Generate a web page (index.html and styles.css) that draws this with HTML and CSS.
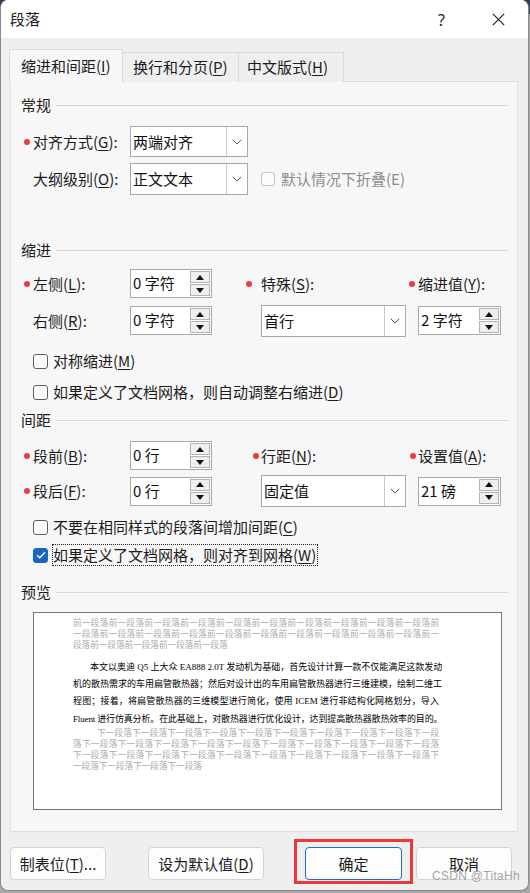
FILE: index.html
```html
<!DOCTYPE html>
<html lang="zh-CN">
<head>
<meta charset="utf-8">
<title>段落</title>
<link rel="stylesheet" href="styles.css">
</head>
<body>
<div class="window">
  <div class="titlebar">
    <span class="title">段落</span>
    <span class="tb-btn help">?</span>
    <span class="tb-btn close"><svg width="13" height="13" viewBox="0 0 13 13"><path d="M0.8 0.8 L12.2 12.2 M12.2 0.8 L0.8 12.2" stroke="#1a1a1a" stroke-width="1.1" fill="none"/></svg></span>
  </div>

  <div class="tabs">
    <div class="tab active">缩进和间距(<u>I</u>)</div>
    <div class="tab t2">换行和分页(<u>P</u>)</div>
    <div class="tab t3">中文版式(<u>H</u>)</div>
  </div>

  <div class="panel">
    <div class="sec-head h-general"><span>常规</span><i class="rule"></i></div>

    <div class="row r-align">
      <span class="lbl req">对齐方式(<u>G</u>):</span>
      <div class="combo c-small h31"><span class="val">两端对齐</span><span class="drop"><svg width="10" height="6" viewBox="0 0 10 6"><path d="M0.7 0.7 L5 5 L9.3 0.7" stroke="#5a5a5a" stroke-width="1" fill="none"/></svg></span></div>
    </div>
    <div class="row r-outline">
      <span class="lbl">大纲级别(<u>O</u>):</span>
      <div class="combo c-small h32"><span class="val">正文文本</span><span class="drop"><svg width="10" height="6" viewBox="0 0 10 6"><path d="M0.7 0.7 L5 5 L9.3 0.7" stroke="#5a5a5a" stroke-width="1" fill="none"/></svg></span></div>
      <span class="check disabled"><i class="box"></i><span>默认情况下折叠(E)</span></span>
    </div>

    <div class="sec-head h-indent"><span>缩进</span><i class="rule"></i></div>
    <div class="grid g-indent">
      <span class="lbl req c1">左侧(<u>L</u>):</span>
      <div class="spin c2"><span class="val">0 字符</span><span class="arrows"><i class="up"></i><i class="down"></i></span></div>
      <span class="lbl req wide c4">特殊(<u>S</u>):</span>
      <span class="lbl req tight c6">缩进值(<u>Y</u>):</span>

      <span class="lbl c1">右侧(<u>R</u>):</span>
      <div class="spin c2"><span class="val">0 字符</span><span class="arrows"><i class="up"></i><i class="down"></i></span></div>
      <div class="combo c4 h32"><span class="val">首行</span><span class="drop"><svg width="10" height="6" viewBox="0 0 10 6"><path d="M0.7 0.7 L5 5 L9.3 0.7" stroke="#5a5a5a" stroke-width="1" fill="none"/></svg></span></div>
      <div class="spin c6"><span class="val">2 字符</span><span class="arrows"><i class="up"></i><i class="down"></i></span></div>
    </div>
    <div class="check row-cb cb-a"><i class="box"></i><span>对称缩进(<u>M</u>)</span></div>
    <div class="check row-cb cb-b"><i class="box"></i><span>如果定义了文档网格，则自动调整右缩进(<u>D</u>)</span></div>

    <div class="sec-head h-spacing"><span>间距</span><i class="rule"></i></div>
    <div class="grid g-spacing">
      <span class="lbl req c1">段前(<u>B</u>):</span>
      <div class="spin c2"><span class="val">0 行</span><span class="arrows"><i class="up"></i><i class="down"></i></span></div>
      <span class="lbl req tight2 c4">行距(<u>N</u>):</span>
      <span class="lbl req tight2 c6">设置值(<u>A</u>):</span>

      <span class="lbl req c1">段后(<u>F</u>):</span>
      <div class="spin c2"><span class="val">0 行</span><span class="arrows"><i class="up"></i><i class="down"></i></span></div>
      <div class="combo c4 h32"><span class="val">固定值</span><span class="drop"><svg width="10" height="6" viewBox="0 0 10 6"><path d="M0.7 0.7 L5 5 L9.3 0.7" stroke="#5a5a5a" stroke-width="1" fill="none"/></svg></span></div>
      <div class="spin c6"><span class="val">21 磅</span><span class="arrows"><i class="up"></i><i class="down"></i></span></div>
    </div>
    <div class="check row-cb cb-c"><i class="box"></i><span>不要在相同样式的段落间增加间距(<u>C</u>)</span></div>
    <div class="check row-cb cb-d checked"><i class="box"><svg width="10" height="8" viewBox="0 0 10 8"><path d="M1 4.2 L3.7 6.8 L9 1.2" stroke="#fff" stroke-width="1.3" fill="none"/></svg></i><span class="focus">如果定义了文档网格，则对齐到网格(<u>W</u>)</span></div>

    <div class="sec-head h-preview"><span>预览</span><i class="rule"></i></div>
    <div class="preview">
      <div class="pv-gray">
        <div class="pv-line full">前一段落前一段落前一段落前一段落前一段落前一段落前一段落前一段落前一段落前一段落前</div>
        <div class="pv-line full">一段落前一段落前一段落前一段落前一段落前一段落前一段落前一段落前一段落前一段落前一</div>
        <div class="pv-line">段落前一段落前一段落前一段落前一段落</div>
      </div>
      <div class="pv-body">
        <div class="pv-bline full first">本文以奥迪 Q5 上大众 EA888 2.0T 发动机为基础，首先设计计算一款不仅能满足这款发动</div>
        <div class="pv-bline full">机的散热需求的车用扁管散热器；然后对设计出的车用扁管散热器进行三维建模，绘制二维工</div>
        <div class="pv-bline full">程图；接着，将扁管散热器的三维模型进行简化，使用 ICEM 进行非结构化网格划分，导入</div>
        <div class="pv-bline full last">Fluent 进行仿真分析。在此基础上，对散热器进行优化设计，达到提高散热器散热效率的目的。</div>
      </div>
      <div class="pv-gray">
        <div class="pv-line full first">下一段落下一段落下一段落下一段落下一段落下一段落下一段落下一段落下一段落下一段</div>
        <div class="pv-line full">落下一段落下一段落下一段落下一段落下一段落下一段落下一段落下一段落下一段落下一段落</div>
        <div class="pv-line full">下一段落下一段落下一段落下一段落下一段落下一段落下一段落下一段落下一段落下一段落下</div>
        <div class="pv-line">一段落下一段落下一段落下一段落</div>
      </div>
    </div>
  </div>

  <div class="buttons">
    <div class="btn b-tabs">制表位(<u>T</u>)...</div>
    <div class="btn b-default">设为默认值(<u>D</u>)</div>
    <div class="btn b-ok">确定</div>
    <div class="btn b-cancel">取消</div>
  </div>

  <div class="highlight"></div>
  <div class="watermark">CSDN @TitaHh</div>
</div>
</body>
</html>
```

FILE: styles.css
```css
* { box-sizing: border-box; margin: 0; padding: 0; }
html, body { width: 530px; height: 893px; overflow: hidden; }
body {
  background: linear-gradient(#2f3d5c 0 14px, #a8a8a8 14px);
  font-family: "Noto Sans CJK SC", "Noto Sans", sans-serif;
  font-size: 15px;
  color: #1b1b1b;
}
u { text-decoration: underline; text-underline-offset: 2px; text-decoration-thickness: 1px; }

.window {
  position: relative;
  width: 529px;
  height: 891px;
  background: #efefef;
  border: 1px solid #8a8a8a;
  border-top: none;
  border-radius: 8px;
  overflow: hidden;
  display: flex;
  flex-direction: column;
}

/* title bar */
.titlebar {
  height: 38px;
  flex: none;
  background: #ffffff;
  display: flex;
  align-items: center;
  padding-left: 9px;
}
.title { font-size: 15px; line-height: 20px; color: #1a1a1a; }
.tb-btn {
  width: 57px;
  height: 38px;
  display: flex;
  align-items: center;
  justify-content: center;
}
.help { margin-left: auto; font-family: "Noto Sans", sans-serif; font-size: 16px; color: #222; padding-top: 1px; }
.close { margin-right: 1px; }

/* tabs */
.tabs {
  flex: none;
  display: flex;
  align-items: flex-end;
  margin-top: 11px;
  padding-left: 8px;
  height: 33px;
  position: relative;
  z-index: 1;
  margin-bottom: -1px;
}
.tab {
  height: 30px;
  line-height: 28px;
  background: #efefef;
  border: 1px solid #dadada;
  border-bottom: none;
  font-size: 15px;
  color: #1b1b1b;
  white-space: nowrap;
}
.tab.active {
  height: 33px;
  line-height: 31px;
  width: 114px;
  padding-left: 11px;
  background: #f7f7f7;
  border-color: #dcdcdc;
}
.tab.t2 { width: 116px; padding-left: 10px; border-left: none; }
.tab.t3 { width: 105px; padding-left: 8px; border-left: none; }

/* panel */
.panel {
  flex: none;
  height: 751px;
  margin: 0 10px 0 9px;
  background: #f7f7f7;
  border: 1px solid #dfdfdf;
  padding: 0 9px 0 10px;
  display: flex;
  flex-direction: column;
}
.sec-head {
  display: flex;
  align-items: center;
  gap: 5px;
  height: 20px;
  line-height: 20px;
  font-size: 15px;
  color: #1b1b1b;
}
.sec-head .rule { flex: 1; height: 1px; background: #d9d9d9; }
.h-general { margin-top: 13px; }
.h-indent { margin-top: 45px; }
.h-spacing { margin-top: 6px; }
.h-preview { margin-top: 15px; }

.row { display: flex; align-items: center; }
.r-align { margin-top: 11px; height: 31px; }
.r-outline { margin-top: 6px; height: 32px; }

.lbl {
  font-size: 15px;
  line-height: 20px;
  white-space: nowrap;
  color: #1b1b1b;
}
.row .lbl, .grid .c1 { width: 109px; padding-left: 12px; }
.lbl.req::before {
  content: "";
  display: inline-block;
  width: 6px;
  height: 6px;
  border-radius: 50%;
  background: #f03a3a;
  margin-left: -9px;
  margin-right: 3px;
  vertical-align: 3px;
}
.lbl.wide::before { margin-left: -15px; margin-right: 9px; }
.lbl.tight::before { margin-left: -9px; margin-right: 3px; }
.lbl.tight2::before { margin-left: -8px; margin-right: 2px; }

/* combo box */
.combo {
  display: flex;
  background: #ffffff;
  border: 1px solid #a7a7a7;
}
.c-small { width: 118px; }
.h31 { height: 31px; }
.h32 { height: 32px; }
.combo .val {
  flex: 1;
  padding-left: 2px;
  font-size: 15px;
  line-height: 29px;
  color: #111;
  white-space: nowrap;
}
.combo .drop {
  width: 21px;
  border-left: 1px solid #c9c9c9;
  display: flex;
  align-items: center;
  justify-content: center;
}

/* spinner */
.spin {
  width: 82px;
  height: 29px;
  display: flex;
  background: #ffffff;
  border: 1px solid #a7a7a7;
}
.spin .val {
  flex: 1;
  padding-left: 2px;
  font-size: 15px;
  line-height: 26px;
  color: #111;
  white-space: nowrap;
}
.spin .arrows {
  width: 21px;
  padding: 1px 1px 1px 0;
  display: flex;
  flex-direction: column;
  gap: 1px;
}
.spin .arrows i {
  flex: 1;
  background: #efefef;
  border: 1px solid #b3b3b3;
  display: flex;
  align-items: center;
  justify-content: center;
}
.spin .arrows i::after {
  content: "";
  width: 0;
  height: 0;
  border-left: 4px solid transparent;
  border-right: 4px solid transparent;
}
.spin .arrows .up::after { border-bottom: 5px solid #111; }
.spin .arrows .down::after { border-top: 5px solid #111; }

/* grids */
.grid {
  display: grid;
  grid-template-columns: 109px 82px 49px 145px 12px 83px;
  align-items: center;
}
.g-indent { margin-top: 9px; grid-template-rows: 29px 33px; row-gap: 6px; }
.g-spacing { margin-top: 11px; grid-template-rows: 29px 32px; row-gap: 5px; }
.c1 { grid-column: 1; }
.c2 { grid-column: 2; }
.c4 { grid-column: 4; }
.c6 { grid-column: 6; }
.grid .combo.c4 { width: 145px; }
.grid .spin.c6 { width: 83px; }

/* checkboxes */
.check {
  display: flex;
  align-items: center;
  gap: 5px;
  font-size: 15px;
  line-height: 20px;
  white-space: nowrap;
  color: #1b1b1b;
}
.check .box {
  width: 15px;
  height: 15px;
  flex: none;
  border: 1px solid #5e5e5e;
  border-radius: 3px;
  background: #fbfbfb;
  display: flex;
  align-items: center;
  justify-content: center;
}
.check.disabled { margin-left: 13px; color: #8c8c8c; gap: 6px; }
.check.disabled .box { border-color: #c4c4c4; width: 14px; height: 14px; }
.row-cb { height: 24px; padding-left: 12px; }
.cb-a { margin-top: 12px; }
.cb-b { margin-top: 7px; }
.cb-c { margin-top: 8px; }
.cb-d { margin-top: 4px; gap: 4px; }
.check.checked .box { background: #1865c4; border-color: #1865c4; }
.focus { border: 1px dotted #222; padding: 0 1px 0 0; line-height: 20px; }

/* preview */
.preview {
  margin: 10px 0 0 12px;
  width: 469px;
  height: 198px;
  background: #ffffff;
  border: 1px solid #767676;
  padding: 5px 0 0 39px;
  font-family: "Liberation Serif", "Noto Sans CJK SC", serif;
}
.pv-gray { color: #aaaaaa; }
.pv-line {
  width: 366px;
  height: 11px;
  line-height: 11px;
  font-size: 8.6px;
  white-space: nowrap;
  text-align: left;
}
.pv-line.full { text-align: justify; text-align-last: justify; }
.pv-line.first { padding-left: 24px; }
.pv-body { margin-top: 8px; color: #000; }
.pv-bline {
  width: 366px;
  height: 17.2px;
  line-height: 17.2px;
  font-size: 9px;
  white-space: nowrap;
  text-align: justify;
  text-align-last: justify;
}
.pv-bline.first { padding-left: 17px; }
.pv-bline.last { letter-spacing: -0.15px; }

/* buttons */
.buttons {
  flex: none;
  display: flex;
  margin-top: 15px;
  padding-left: 9px;
}
.btn {
  height: 33px;
  line-height: 31px;
  text-align: center;
  background: #fdfdfd;
  border: 1px solid #d3d3d3;
  border-radius: 4px;
  font-size: 15px;
  color: #1b1b1b;
  white-space: nowrap;
}
.b-tabs { width: 96px; }
.b-default { width: 116px; margin-left: 42px; }
.b-ok { width: 97px; margin-left: 41px; border-color: #1b6fcf; }
.b-cancel { width: 96px; margin-left: 14px; }

/* overlays */
.highlight {
  position: absolute;
  left: 293px;
  top: 839px;
  width: 119px;
  height: 45px;
  border: 3px solid #ee3838;
}
.watermark {
  position: absolute;
  left: 431px;
  top: 869px;
  font-family: "Liberation Sans", sans-serif;
  font-size: 12px;
  line-height: 14px;
  color: #a3a3a3;
  letter-spacing: 0.3px;
  text-shadow: 0 0 1px #fff;
}
```
